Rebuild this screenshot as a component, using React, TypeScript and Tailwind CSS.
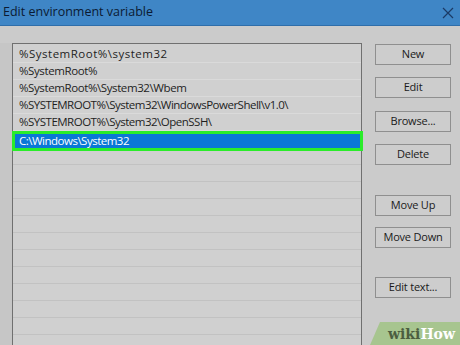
import React from "react";

const rows: { t: string; ls: string }[] = [
  { t: "%SystemRoot%\\system32", ls: "tracking-[0.5px]" },
  { t: "%SystemRoot%", ls: "tracking-[-0.4px]" },
  { t: "%SystemRoot%\\System32\\Wbem", ls: "tracking-[-0.4px]" },
  { t: "%SYSTEMROOT%\\System32\\WindowsPowerShell\\v1.0\\", ls: "tracking-[-0.5px]" },
  { t: "%SYSTEMROOT%\\System32\\OpenSSH\\", ls: "tracking-[-0.5px]" },
];

function Btn({ label, className = "" }: { label: string; className?: string }) {
  return (
    <div
      className={
        "h-[21px] w-[76px] border border-[#8f8f8f] bg-[#cdcdcd] flex items-center justify-center text-[11px] tracking-[-0.2px] text-[#1a1a1a] " +
        className
      }
    >
      {label}
    </div>
  );
}

export default function App() {
  return (
    <div
      className="w-[460px] h-[345px] overflow-hidden bg-[#cbcbcb] relative"
      style={{ fontFamily: '"Open Sans", "Noto Sans", sans-serif' }}
    >
      {/* Title bar */}
      <div className="h-[26px] bg-[#3f86c6] border-b border-[#2f6eaa] flex items-center justify-between pl-[3px] pr-[4px]">
        <span className="text-[12.5px] font-medium text-[#0b1a33]">Edit environment variable</span>
        <svg width="12" height="12" viewBox="0 0 12 12" className="mr-[2px]">
          <path d="M1 1 L11 11 M11 1 L1 11" stroke="#1b3a66" strokeWidth="1.2" fill="none" />
        </svg>
      </div>

      <div className="flex pt-[17px]">
        <div className="w-[12px] bg-[#c6c6c6]" />
        {/* List */}
        <div className="w-[350px] h-[302px] border-l border-t border-r border-[#707070] bg-[#d0d0d0] pt-[2px]">
          {rows.map((r) => (
            <div
              key={r.t}
              className={
                "h-[17px] border-b border-[#dadada] pl-[6px] flex items-center text-[11.5px] text-[#1e1e1e] whitespace-nowrap " +
                r.ls
              }
            >
              {r.t}
            </div>
          ))}
          <div className="h-[20px] -ml-[1px] w-[351px] border-[3px] border-[#2aec2a] bg-[#0a77d6] pl-[4px] flex items-center text-[11.5px] tracking-[-0.5px] text-white">
            C:\Windows\System32
          </div>
          <div className="h-[14px] border-b border-[#c2c2c2]" />
          {Array.from({ length: 11 }).map((_, i) => (
            <div key={i} className="h-[17px] border-b border-[#c2c2c2]" />
          ))}
        </div>
        {/* Buttons */}
        <div className="ml-[13px] flex flex-col pt-[1px]">
          <Btn label="New" />
          <Btn label="Edit" className="mt-[12px]" />
          <Btn label="Browse..." className="mt-[13px]" />
          <Btn label="Delete" className="mt-[12px]" />
          <Btn label="Move Up" className="mt-[30px]" />
          <Btn label="Move Down" className="mt-[11px]" />
          <Btn label="Edit text..." className="mt-[29px]" />
        </div>
      </div>

      {/* wikiHow watermark */}
      <div className="absolute right-0 bottom-0 w-[90px] h-[23px]">
        <svg width="90" height="23" viewBox="0 0 90 23" className="absolute inset-0">
          <polygon points="10,0 90,0 90,23 0,23" fill="#a3c488" opacity="0.9" />
        </svg>
        <div
          className="absolute inset-0 flex items-center justify-end pr-[5px] text-[14px] font-bold leading-none"
          style={{ fontFamily: '"DejaVu Serif", "Liberation Serif", serif' }}
        >
          <span className="text-[#4c5e40]">wiki</span>
          <span className="text-white">How</span>
        </div>
      </div>
    </div>
  );
}
